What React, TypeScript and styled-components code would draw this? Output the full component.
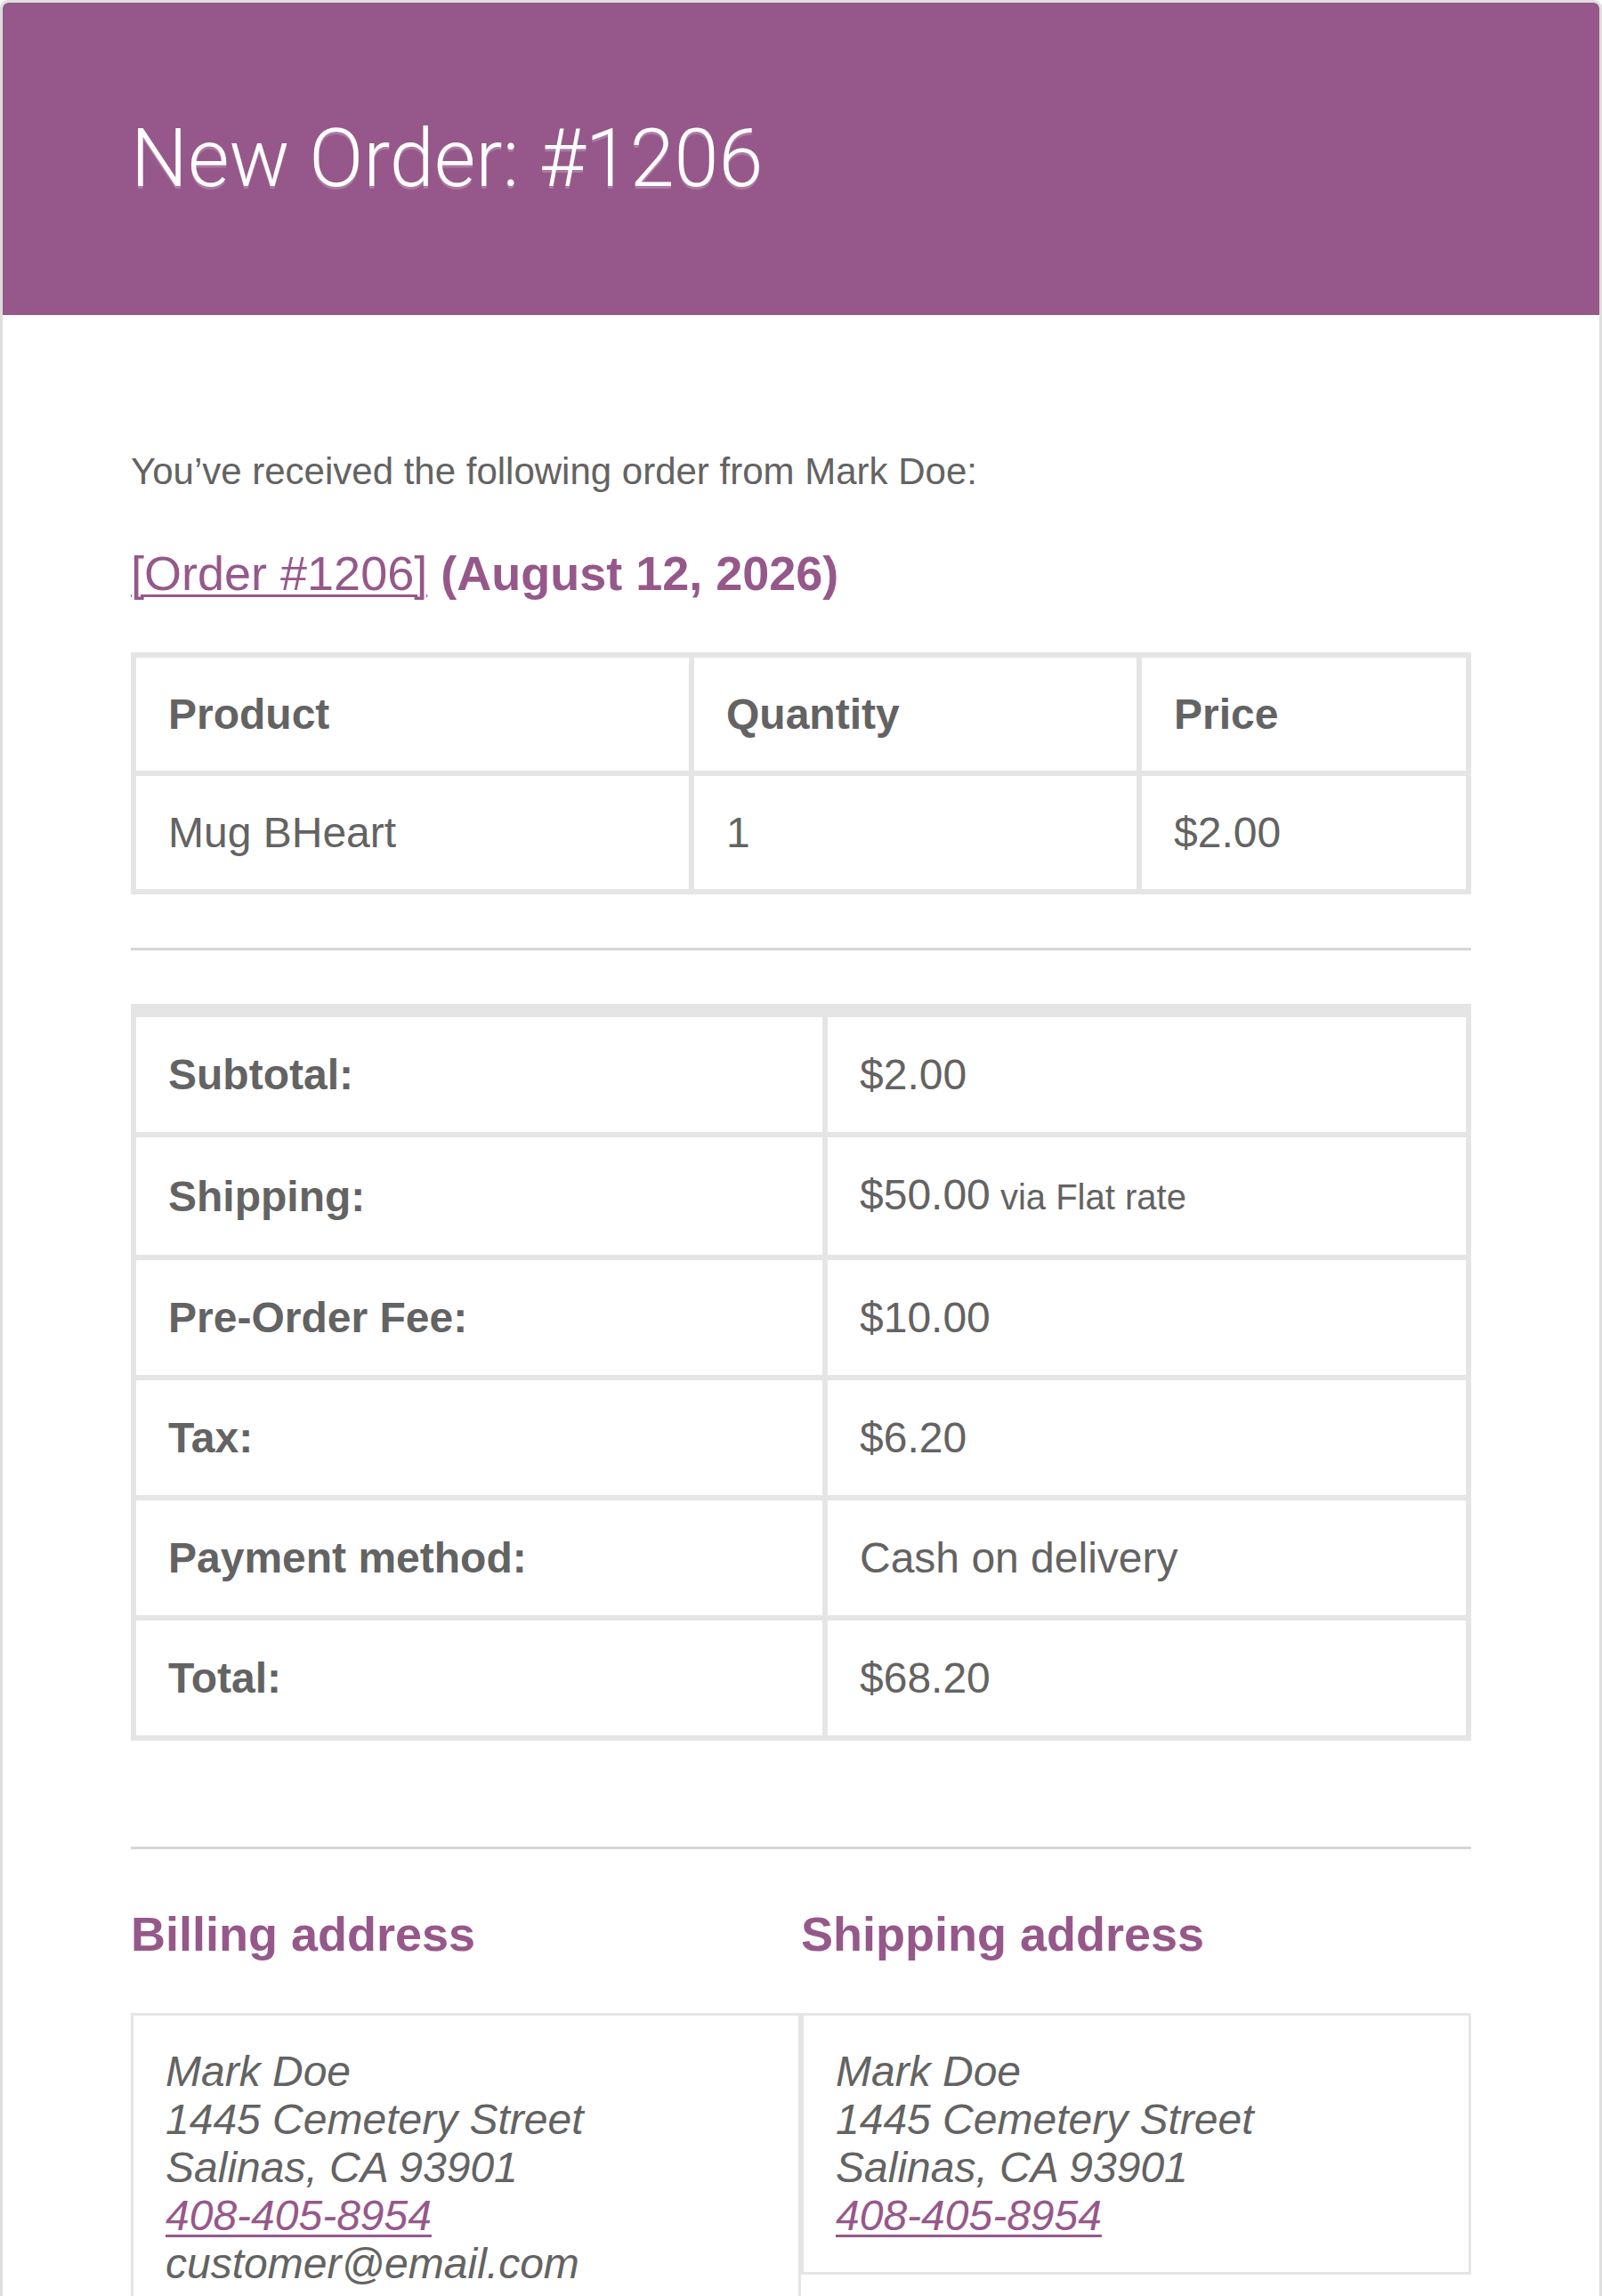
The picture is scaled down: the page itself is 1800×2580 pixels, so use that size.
import React from 'react';
import styled, { createGlobalStyle } from 'styled-components';

const GlobalStyle = createGlobalStyle`
  html, body {
    margin: 0;
    padding: 0;
    background: #ffffff;
  }
  * {
    box-sizing: border-box;
  }
`;

const palette = {
  purple: '#96588a',
  text: '#636363',
  border: '#e5e5e5',
  rule: '#d6d6d6',
};

const Container = styled.div`
  width: 1800px;
  background-color: white;
  border: 3px solid #dedede;
  border-radius: 9px;
  overflow: hidden;
  font-family: 'Liberation Sans', Arial, Helvetica, sans-serif;
`;

const Header = styled.div`
  background-color: ${palette.purple};
  padding: 108px 144px;
  border-radius: 6px 6px 0 0;

  h1 {
    margin: 0;
    color: #ffffff;
    font-family: Roboto, 'Liberation Sans', Arial, sans-serif;
    font-size: 90px;
    font-weight: 300;
    line-height: 135px;
    text-shadow: 0 3px 0 #ab79a1;
  }
`;

// flex column so the section margins add up instead of collapsing
const Body = styled.div`
  display: flex;
  flex-direction: column;
  padding: 144px;
  color: ${palette.text};

  p {
    margin: 0 0 48px;
    font-size: 42px;
    line-height: 63px;
  }
  a {
    color: ${palette.purple};
    text-decoration: underline;
    text-decoration-thickness: 3px;
    text-underline-offset: 5px;
  }
`;

const Heading = styled.h2`
  margin: 0 0 54px;
  color: ${palette.purple};
  font-size: 54px;
  font-weight: 700;
  line-height: 70px;

  a {
    font-weight: 400;
  }
`;

const Table = styled.table<{ $mb?: number }>`
  width: 100%;
  table-layout: fixed;
  border-collapse: separate;
  border-spacing: 0;
  border: 3px solid ${palette.border};
  margin-bottom: ${p => p.$mb ?? 0}px;
  color: ${palette.text};
  font-size: 48px;
`;

const Th = styled.th<{ $w?: number; $lh?: number; $first?: boolean }>`
  width: ${p => (p.$w ? `${p.$w}px` : 'auto')};
  border: 3px solid ${palette.border};
  border-top-width: ${p => (p.$first ? 12 : 3)}px;
  padding: 36px;
  text-align: left;
  vertical-align: middle;
  font-weight: 700;
  line-height: ${p => p.$lh ?? 55}px;
`;

const Td = styled.td<{ $lh?: number; $first?: boolean }>`
  border: 3px solid ${palette.border};
  border-top-width: ${p => (p.$first ? 12 : 3)}px;
  padding: 36px;
  text-align: left;
  vertical-align: middle;
  line-height: ${p => p.$lh ?? 55}px;

  small {
    font-size: 40px;
  }
`;

const Divider = styled.div`
  flex-shrink: 0;
  height: 3px;
  background-color: ${palette.rule};
  margin: 60px 0;
`;

const Addresses = styled.div`
  display: grid;
  grid-template-columns: 1fr 1fr;
  align-items: start;
`;

const AddressBox = styled.address`
  padding: 36px;
  border: 3px solid ${palette.border};
  font-size: 48px;
  font-style: italic;
  line-height: 54px;
  color: ${palette.text};
`;

const totals = [
  { label: 'Subtotal:', value: '$2.00' },
  { label: 'Shipping:', value: '$50.00', note: 'via Flat rate' },
  { label: 'Pre-Order Fee:', value: '$10.00' },
  { label: 'Tax:', value: '$6.20' },
  { label: 'Payment method:', value: 'Cash on delivery' },
  { label: 'Total:', value: '$68.20' },
];

const Address: React.FC<{ title: string; email?: string }> = ({ title, email }) => (
  <div>
    <Heading>{title}</Heading>
    <AddressBox>
      Mark Doe
      <br />
      1445 Cemetery Street
      <br />
      Salinas, CA 93901
      <br />
      <a href="#">408-405-8954</a>
      {email && (
        <>
          <br />
          {email}
        </>
      )}
    </AddressBox>
  </div>
);

const App: React.FC = () => {
  return (
    <>
      <GlobalStyle />
      <Container>
        <Header>
          <h1>New Order: #1206</h1>
        </Header>
        <Body>
          <p>You’ve received the following order from Mark Doe:</p>
          <Heading>
            <a href="#">[Order #1206]</a> (August 12, 2026)
          </Heading>

          <Table>
            <thead>
              <tr>
                <Th $w={627}>Product</Th>
                <Th $w={503}>Quantity</Th>
                <Th>Price</Th>
              </tr>
            </thead>
            <tbody>
              <tr>
                <Td>Mug BHeart</Td>
                <Td>1</Td>
                <Td>$2.00</Td>
              </tr>
            </tbody>
          </Table>

          <Divider />

          <Table $mb={59}>
            <tbody>
              {totals.map((row, i) => (
                <tr key={row.label}>
                  <Th $w={777} $lh={57} $first={i === 0}>
                    {row.label}
                  </Th>
                  <Td $lh={57} $first={i === 0}>
                    {row.value}
                    {row.note && <small> {row.note}</small>}
                  </Td>
                </tr>
              ))}
            </tbody>
          </Table>

          <Divider />

          <Addresses>
            <Address title="Billing address" email="customer@email.com" />
            <Address title="Shipping address" />
          </Addresses>
        </Body>
      </Container>
    </>
  );
};

export default App;
